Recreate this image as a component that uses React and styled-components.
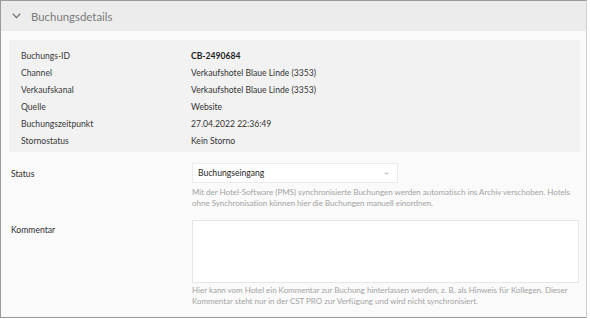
import React from "react";
import styled, { createGlobalStyle } from "styled-components";

const Global = createGlobalStyle`
  html, body { margin: 0; padding: 0; background: #fff; }
  body { font-family: Lato, "Open Sans", sans-serif; }
`;

const Frame = styled.div`
  width: 587px;
  height: 318px;
  border: 1px solid #9a9a9a;
  border-right-color: #cfcfcf;
  background: #fafafa;
  box-sizing: border-box;
  overflow: hidden;
  display: flex;
  flex-direction: column;
`;

const Header = styled.div`
  height: 30px;
  background: #ececec;
  display: flex;
  align-items: center;
  padding-left: 11px;
  gap: 10px;
  color: #7a7a7a;
  font-size: 11.4px;
  flex-shrink: 0;
`;

const Body = styled.div`
  padding: 9px 6px 0 8px;
  display: flex;
  flex-direction: column;
`;

const InfoBox = styled.div`
  background: #f2f2f2;
  padding: 7px 0 3px 12px;
  display: grid;
  grid-template-columns: 170px 1fr;
  grid-auto-rows: 17px;
  align-items: center;
  font-size: 8.6px;
  color: #383838;
`;

const Value = styled.div`
  font-weight: ${(p) => (p.$bold ? 700 : 400)};
  color: ${(p) => (p.$bold ? "#1e1e1e" : "#333")};
`;

const FieldRow = styled.div`
  display: grid;
  grid-template-columns: 181px 1fr;
  padding-left: 2px;
  margin-top: ${(p) => p.$mt}px;
`;

const FieldLabel = styled.div`
  font-size: 8.6px;
  line-height: 12px;
  color: #2e2e2e;
  padding-top: ${(p) => p.$pt}px;
`;

const FieldBody = styled.div`
  display: flex;
  flex-direction: column;
  padding-right: 1px;
`;

const Select = styled.div`
  width: 206px;
  height: 20px;
  box-sizing: border-box;
  background: #fff;
  border: 1px solid #ebebeb;
  display: flex;
  align-items: center;
  justify-content: space-between;
  padding: 0 8px 0 5px;
  font-size: 8.6px;
  color: #262626;
`;

const TextArea = styled.div`
  height: 63px;
  box-sizing: border-box;
  background: #fff;
  border: 1px solid #e6e6e6;
`;

const Help = styled.div`
  font-size: 8px;
  letter-spacing: -0.02px;
  line-height: 10.5px;
  color: #a3a3a3;
  margin-top: ${(p) => p.$mt}px;
`;

const Chevron = ({ w = 10, h = 6, color = "#666", sw = 1.5 }) => (
  <svg width={w} height={h} viewBox={`0 0 ${w} ${h}`} fill="none">
    <path d={`M0.7 0.7 L${w / 2} ${h - 0.9} L${w - 0.7} 0.7`} stroke={color} strokeWidth={sw} />
  </svg>
);

const rows = [
  ["Buchungs-ID", "CB-2490684", true],
  ["Channel", "Verkaufshotel Blaue Linde (3353)"],
  ["Verkaufskanal", "Verkaufshotel Blaue Linde (3353)"],
  ["Quelle", "Website"],
  ["Buchungszeitpunkt", "27.04.2022 22:36:49"],
  ["Stornostatus", "Kein Storno"],
];

export default function App() {
  return (
    <>
      <Global />
      <Frame>
        <Header>
          <Chevron w={9} h={5.5} color="#6a6a6a" sw={1.2} />
          <span>Buchungsdetails</span>
        </Header>
        <Body>
          <InfoBox>
            {rows.map(([l, v, b]) => (
              <React.Fragment key={l}>
                <div>{l}</div>
                <Value $bold={b}>{v}</Value>
              </React.Fragment>
            ))}
          </InfoBox>
          <FieldRow $mt={11}>
            <FieldLabel $pt={5}>Status</FieldLabel>
            <FieldBody>
              <Select>
                <span>Buchungseingang</span>
                <Chevron w={5} h={3} color="#999" sw={0.9} />
              </Select>
              <Help $mt={4}>
                Mit der Hotel-Software (PMS) synchronisierte Buchungen werden automatisch ins Archiv verschoben. Hotels ohne Synchronisation können hier die Buchungen manuell einordnen.
              </Help>
            </FieldBody>
          </FieldRow>
          <FieldRow $mt={12}>
            <FieldLabel $pt={4}>Kommentar</FieldLabel>
            <FieldBody>
              <TextArea />
              <Help $mt={2}>
                Hier kann vom Hotel ein Kommentar zur Buchung hinterlassen werden, z. B. als Hinweis für Kollegen. Dieser Kommentar steht nur in der CST PRO zur Verfügung und wird nicht synchronisiert.
              </Help>
            </FieldBody>
          </FieldRow>
        </Body>
      </Frame>
    </>
  );
}
